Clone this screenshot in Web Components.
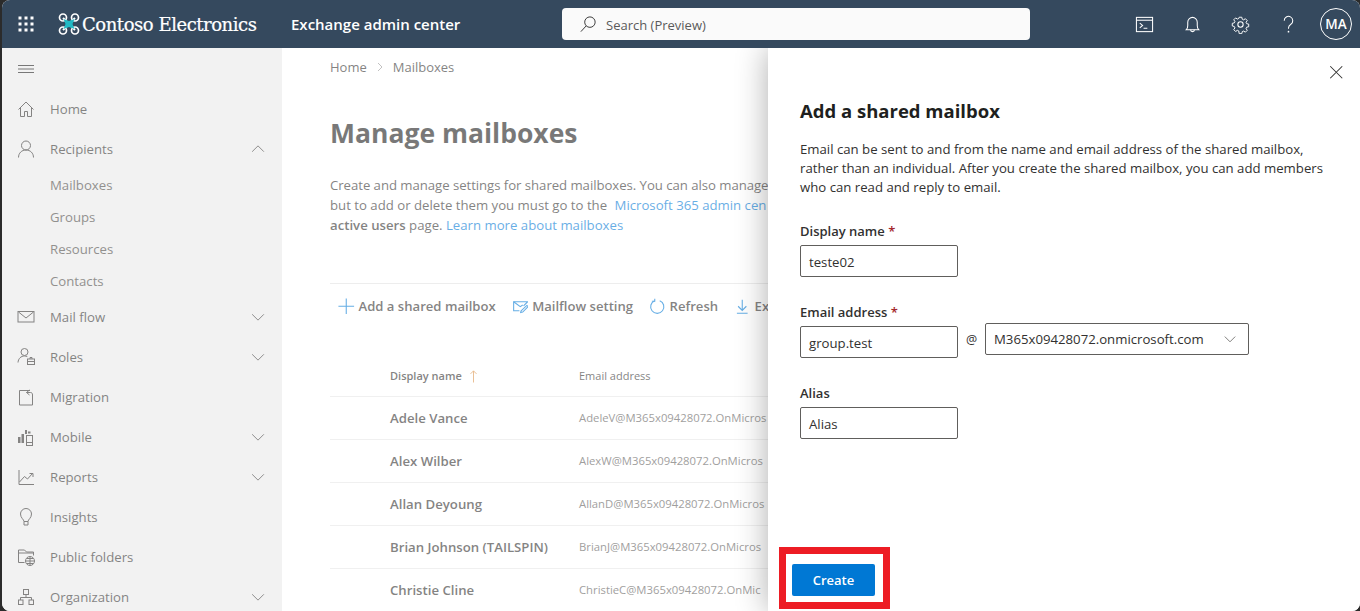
<!DOCTYPE html>
<html lang="en"><head><meta charset="utf-8"><title>Exchange admin center</title>
<style>
html,body{margin:0;height:611px;overflow:hidden;background:#2b2b2b;font-family:"Open Sans","Liberation Sans",sans-serif;}
</style></head><body>
<x-app>
  <x-topbar slot="top"></x-topbar>
  <x-sidenav slot="nav">
    <x-nav-item icon="home">Home</x-nav-item>
    <x-nav-item icon="person" chevron="up">Recipients</x-nav-item>
    <x-sub-item>Mailboxes</x-sub-item>
    <x-sub-item>Groups</x-sub-item>
    <x-sub-item>Resources</x-sub-item>
    <x-sub-item>Contacts</x-sub-item>
    <x-nav-item icon="mail" chevron="down">Mail flow</x-nav-item>
    <x-nav-item icon="roles" chevron="down">Roles</x-nav-item>
    <x-nav-item icon="migration">Migration</x-nav-item>
    <x-nav-item icon="mobile" chevron="down">Mobile</x-nav-item>
    <x-nav-item icon="reports" chevron="down">Reports</x-nav-item>
    <x-nav-item icon="bulb">Insights</x-nav-item>
    <x-nav-item icon="pubfolder">Public folders</x-nav-item>
    <x-nav-item icon="org" chevron="down">Organization</x-nav-item>
  </x-sidenav>
  <x-main slot="main"></x-main>
  <x-panel slot="panel"></x-panel>
</x-app>
<script>
const S='fill="none" stroke="currentColor" stroke-width="1"';
const ICONS={
 waffle:`<g fill="currentColor">${[3,9,15].flatMap(y=>[3,9,15].map(x=>`<rect x="${x-.5}" y="${y-.5}" width="3" height="3"/>`)).join('')}</g>`,
 home:`<path ${S} d="M2.5 10.5 10 3l7.5 7.5M4.5 8.5V17.500h4v-5h3v5h4V8.500"/>`,
 person:`<g ${S}><circle cx="10" cy="6.500" r="4.500"/><path d="M2.500 18.500c0-4.500 3.300-7.500 7.500-7.500s7.500 3 7.500 7.500"/></g>`,
 mail:`<g ${S}><rect x="2" y="4.500" width="16" height="10.500"/><path d="M2.500 5 10 11l7.500-6"/></g>`,
 roles:`<g ${S}><circle cx="8.500" cy="5" r="3.500"/><path d="M2 15.500c.3-4 3-6.500 6.500-6.500 1 0 2 .2 2.800.6"/><rect x="11.500" y="12" width="7" height="5.500"/><path d="M14 12v-1.500h2V12M11.500 14.500h7"/></g>`,
 migration:`<g ${S}><path d="M14 3.500H3.500V18h13v-7"/><path d="M13.500 8 10.500 5.500l3-2.500M10.500 5.500h4c1.500 0 2 1 2 2.500V18"/></g>`,
 mobile:`<g fill="currentColor"><rect x="2" y="10" width="2.500" height="6"/><rect x="5.500" y="7" width="2.500" height="9"/><rect x="9" y="3" width="2" height="4"/><rect x="12" y="4.500" width="2.500" height="2"/></g><g ${S}><rect x="10.500" y="8.500" width="6" height="10"/><path d="M10.500 15.500h6"/></g>`,
 reports:`<g ${S}><path d="M3 3v14.500h15"/><path d="m3.500 15 5-5.500 3 2.500 5-5.500M13.500 6.500h3.500V10"/></g>`,
 bulb:`<g ${S}><path d="M8 14.500c0-2-3.500-3.500-3.500-7.500a5.500 5.500 0 0 1 11 0c0 4-3.500 5.500-3.500 7.500z"/><path d="M8 14.500v3.500h4v-3.500"/></g>`,
 pubfolder:`<g ${S}><path d="M2.500 15.500V3h6l2 2h7v3.500M2.500 6h15M2.500 15.500h6"/><circle cx="14" cy="14" r="4.500"/><path d="M9.500 14h9M14 9.500v9M11 11.500h6M11 16.500h6"/></g>`,
 org:`<g ${S}><rect x="7.500" y="2.500" width="5" height="5"/><rect x="2.500" y="13" width="4.500" height="4.500"/><rect x="13" y="13" width="4.500" height="4.500"/><path d="M10 7.500v3M4.500 13v-2.500h11V13"/></g>`,
 chevdown:`<path ${S} d="m3.500 7 6.500 6.500L16.500 7"/>`,
 chevup:`<path ${S} d="M3.500 13 10 6.500 16.500 13"/>`,
 chevr:`<path ${S} d="m6 2 8 8-8 8"/>`,
 hamburger:`<path ${S} d="M2 6.500h16M2 10h16M2 13.500h16"/>`,
 close:`<path ${S} d="m3.500 3.500 13 13M16.500 3.500l-13 13"/>`,
 search:`<g ${S}><circle cx="11.500" cy="7.500" r="5.500"/><path d="M7.500 11.500 2 17.500"/></g>`,
 console:`<g ${S}><rect x="1.500" y="2.500" width="17" height="15"/><path d="M1.500 5.500h17"/><path d="m5 8.500 3 2.500-3 2.500M9 14h4"/></g>`,
 bell:`<g ${S}><path d="M3.500 15.500h13c-1-1-1.500-2-1.500-4.500V7.500a5 5 0 0 0-10 0V11c0 2.500-.5 3.500-1.500 4.500z"/><path d="M8 15.500a2 2 0 0 0 4 0"/></g>`,
 gear:`<g ${S}><circle cx="10" cy="10" r="2.800"/><path d="M8.500 2h3l.5 2.300 1.600.7 2-1.300 2.100 2.100-1.300 2 .7 1.600 2.300.5v3l-2.300.5-.7 1.600 1.300 2-2.100 2.100-2-1.300-1.600.7-.5 2.300h-3L8 17.700l-1.600-.7-2 1.300-2.100-2.100 1.300-2-.7-1.600L.6 12V9l2.300-.5.700-1.600-1.300-2 2.100-2.100 2 1.300L8 3.400z" transform="translate(.8 .5) scale(.92)"/></g>`,
 help:`<g ${S}><path d="M5.500 6a4.500 4.500 0 1 1 7 3.700c-1.500 1-2.500 2-2.500 4v.800"/></g><circle cx="10" cy="17.500" r=".9" fill="currentColor"/>`,
 plus:`<path ${S} d="M10 .5v19M.5 10h19"/>`,
 mailflow:`<g ${S}><path d="M9 15.500H2V4.500h17l-5 5"/><path d="M2 4.500 10 10.500l3-2M11 15.500l7-6.500 1.500 1.500-6.500 6.500-2.500.5z"/></g>`,
 refresh:`<g ${S}><path d="M13 3.200A8 8 0 1 1 7 3.200"/><path d="M7 .800V4H3.500"/></g>`,
 download:`<g ${S}><path d="M10 2v13M5 10l5 5 5-5M3.500 18.500h13"/></g>`,
 sortup:`<path ${S} d="M10 18V2.500M6 6.500l4-4 4 4"/>`
};
function def(name,css,html){
  customElements.define(name,class extends HTMLElement{
    constructor(){super();this.attachShadow({mode:'open'});}
    connectedCallback(){this.shadowRoot.innerHTML=`<style>${css}</style>`+(typeof html==='function'?html(this):html);}
  });
}
def('x-icon',':host{display:inline-flex;width:var(--s,20px);height:var(--s,20px);flex:none;color:inherit}svg{width:100%;height:100%;display:block}svg [stroke]{stroke-width:var(--sw,1px)}',
  el=>`<svg viewBox="0 0 20 20" aria-hidden="true">${ICONS[el.getAttribute('name')]||''}</svg>`);
def('x-app',`:host{display:grid;grid-template-rows:48px 1fr;grid-template-columns:280px 1fr;height:611px;margin-left:2px;border-radius:8px;overflow:hidden;position:relative;background:#fff}
 ::slotted([slot=top]){grid-column:1/3}
 .dim{position:absolute;left:0;right:0;top:48px;bottom:0;background:rgba(255,255,255,.4);pointer-events:none}`,
 `<slot name="top"></slot><slot name="nav"></slot><slot name="main"></slot><div class="dim"></div><slot name="panel"></slot>`);
def('x-topbar',`:host{display:flex;align-items:center;background:#35495e;color:#fff;height:48px;position:relative;z-index:3}
 .left{display:flex;align-items:center;width:560px;flex:none}
 .w{width:48px;display:flex;justify-content:center;--s:20px}
 .logo{width:22px;height:24px;margin-left:8px;flex:none}
 .brand{font:400 18px/24px "DejaVu Serif",serif;letter-spacing:-.45px;margin-left:2px;width:209px;white-space:nowrap;-webkit-text-stroke:.2px #fff;padding-top:2px}
 .app{font:600 15px/20px "Open Sans",sans-serif;white-space:nowrap}
 .search{width:468px;height:32px;background:#fafafa;border-radius:4px;display:flex;align-items:center;color:#5a5a5a;font:400 13px/20px "Open Sans",sans-serif;flex:none}
 .search x-icon{--s:19px;margin-left:17px;margin-right:8px;color:#333}
 .search span{padding-top:2px}
 .right{margin-left:auto;display:flex;align-items:center}
 .b{width:48px;height:48px;display:flex;align-items:center;justify-content:center;--s:19px;--sw:1.100px}
 .av{box-sizing:border-box;width:32px;height:32px;border:1px solid #fff;border-radius:50%;display:flex;align-items:center;justify-content:center;font:600 13.500px "Open Sans",sans-serif}`,
 `<div class="left"><div class="w"><x-icon name="waffle"></x-icon></div>
  <svg class="logo" viewBox="0 0 22 24"><path d="M5 6 17 18M17 6 5 18" stroke="#fff" stroke-width="2"/><g fill="none" stroke="#fff" stroke-width="1.700"><circle cx="5" cy="5.500" r="3.500"/><circle cx="17" cy="5.500" r="3.500"/><circle cx="5" cy="18.500" r="3.500"/><circle cx="17" cy="18.500" r="3.500"/></g><path d="M5.500 7 11 9 16.500 7 14.500 12 16.500 17 11 15 5.500 17 7.500 12z" fill="#21b9c4"/></svg>
  <div class="brand">Contoso Electronics</div><div class="app">Exchange admin center</div></div>
  <div class="search"><x-icon name="search"></x-icon><span>Search (Preview)</span></div>
  <div class="right"><div class="b"><x-icon name="console"></x-icon></div><div class="b"><x-icon name="bell"></x-icon></div><div class="b"><x-icon name="gear"></x-icon></div><div class="b"><x-icon name="help"></x-icon></div><div class="b"><div class="av">MA</div></div></div>`);
def('x-sidenav',`:host{display:block;background:#e9e9e9;color:#323130;overflow:hidden;height:563px}
 .h{height:41px;display:flex;align-items:center;padding-left:14px;color:#1f1f1f;--s:20px}`,
 `<div class="h"><x-icon name="hamburger"></x-icon></div><slot></slot>`);
def('x-nav-item',`:host{display:flex;align-items:center;height:40px;padding-left:14px;font:400 13.200px/20px "Open Sans",sans-serif}
 .t{flex:1;white-space:nowrap;margin-left:14px}
 .c{--s:18px;margin-right:15px;}
 .i{--s:20px;margin-left:0}`,
 el=>`<x-icon class="i" name="${el.getAttribute('icon')}"></x-icon><span class="t"><slot></slot></span>${el.hasAttribute('chevron')?`<x-icon class="c" name="chev${el.getAttribute('chevron')}"></x-icon>`:''}`);
def('x-sub-item',`:host{display:flex;align-items:center;height:32px;padding-left:48px;font:400 13.200px/20px "Open Sans",sans-serif;color:#484644}`,`<slot></slot>`);
def('x-toolitem',`:host{display:inline-flex;align-items:center;height:44px;padding:0 8px;gap:4px;font:600 13.100px/20px "Open Sans",sans-serif;color:#323130;white-space:nowrap}
 x-icon{--s:16.500px;--sw:1.300px;color:#0078d4}`,
 el=>`<x-icon name="${el.getAttribute('icon')}"></x-icon><slot></slot>`);
def('x-row',`:host{display:flex;align-items:center;height:42px;border-bottom:1px solid #e6e6e6;white-space:nowrap}
 .n{width:189px;padding-left:60px;box-sizing:content-box;flex:none;font:600 13.200px/20px "Open Sans",sans-serif;color:#323130}
 .e{font:400 11.300px/20px "Open Sans",sans-serif;color:#605e5c}`,
 el=>`<span class="n">${el.getAttribute('name')}</span><span class="e">${el.getAttribute('email')}</span>`);
def('x-main',`:host{display:block;background:#fff;padding-left:48px;overflow:hidden;color:#201f1e;height:563px;box-sizing:border-box;width:486px}
 .bc{height:38px;display:flex;align-items:center;font:400 13px/20px "Open Sans",sans-serif;color:#323130;gap:8px}
 .bc x-icon{--s:10px}
 h1{margin:27px 0 0;font:700 26.500px/40px "Open Sans",sans-serif;color:#201f1e;white-space:nowrap}
 p{margin:22px 0 0;font:400 13.200px/20px "Open Sans",sans-serif;color:#323130;white-space:nowrap}
 .l1{letter-spacing:-.05px}
 .m{margin-left:4px}
 a{color:#0078d4;text-decoration:none}
 b{font-weight:600}
 .div{margin-top:48px;height:1px;background:#e1e1e1}
 .tb{display:flex;white-space:nowrap}
 .th{margin-top:28px;height:40px;display:flex;align-items:center;border-bottom:1px solid #e6e6e6;font:400 11px/16px "Open Sans",sans-serif;color:#323130;white-space:nowrap}
 .th .n{width:189px;padding-left:60px;flex:none;display:flex;align-items:center;gap:4px;font-weight:600}
 .th x-icon{--s:15px;--sw:1.200px;color:#d98a3d}`,
 `<div class="bc"><span>Home</span><x-icon name="chevr"></x-icon><span>Mailboxes</span></div>
  <h1>Manage mailboxes</h1>
  <p><span class="l1">Create and manage settings for shared mailboxes. You can also manage</span><br>but to add or delete them you must go to the <a class="m">Microsoft 365 admin cen</a><br><b>active users</b> page. <a>Learn more about mailboxes</a></p>
  <div class="div"></div>
  <div class="tb"><x-toolitem icon="plus">Add a shared mailbox</x-toolitem><x-toolitem icon="mailflow">Mailflow setting</x-toolitem><x-toolitem icon="refresh">Refresh</x-toolitem><x-toolitem icon="download">Ex</x-toolitem></div>
  <div class="th"><span class="n">Display name <x-icon name="sortup"></x-icon></span><span>Email address</span></div>
  <x-row name="Adele Vance" email="AdeleV@M365x09428072.OnMicros"></x-row>
  <x-row name="Alex Wilber" email="AlexW@M365x09428072.OnMicros"></x-row>
  <x-row name="Allan Deyoung" email="AllanD@M365x09428072.OnMicros"></x-row>
  <x-row name="Brian Johnson (TAILSPIN)" email="BrianJ@M365x09428072.OnMicros"></x-row>
  <x-row name="Christie Cline" email="ChristieC@M365x09428072.OnMic"></x-row>`);
def('x-input',`:host{display:flex;align-items:center;box-sizing:border-box;width:158px;height:32px;border:1px solid #605e5c;border-radius:2px;padding:1px 8px 0;font:400 13.200px/20px "Open Sans",sans-serif;color:#323130;background:#fff;white-space:nowrap}`,`<slot></slot>`);
def('x-panel',`:host{position:absolute;top:48px;right:0;bottom:0;width:592px;background:#fff;box-shadow:0 0 30px rgba(0,0,0,.32);display:flex;flex-direction:column;z-index:2;color:#323130}
 .close{display:flex;justify-content:flex-end;padding:8px 8px 0 0}
 .close span{width:32px;height:32px;display:flex;align-items:center;justify-content:center;--s:18.500px;--sw:1.100px;color:#323130}
 .body{flex:1;padding:8px 32px 0}
 h2{margin:0;font:700 18.500px/30px "Open Sans",sans-serif;color:#201f1e;white-space:nowrap}
 p{margin:14px 0 24px;font:400 13.200px/19px "Open Sans",sans-serif;color:#323130;white-space:nowrap}
 label{display:block;font:600 13px/20px "Open Sans",sans-serif;color:#323130;white-space:nowrap}
 label i{color:#a4262c;font-style:normal}
 .g1{margin-top:4px;margin-bottom:25px}
 .rowl{margin-bottom:1px}
 .row{display:flex;align-items:flex-start;margin-bottom:25px}
 .row x-input.em{margin-top:3px}
 .at{width:27px;text-align:center;font:400 12.500px/32px "Open Sans",sans-serif;margin-top:1px}
 .sel{width:264px;justify-content:space-between;--s:16px;padding-top:0;padding-bottom:1px}
 .sel x-icon{margin-right:2px;color:#605e5c}
 .foot{padding:0 0 2px 11px;display:flex}
 .mark{border:7px solid #ed1c24;padding:10px 8px 6px 6px;display:flex}
 button{all:unset;box-sizing:border-box;width:83px;height:32px;background:#0078d4;border-radius:2px;color:#fff;font:600 13px/32px "Open Sans",sans-serif;text-align:center}`,
 `<div class="close"><span><x-icon name="close"></x-icon></span></div>
  <div class="body"><h2>Add a shared mailbox</h2>
  <p>Email can be sent to and from the name and email address of the shared mailbox,<br>rather than an individual. After you create the shared mailbox, you can add members<br>who can read and reply to email.</p>
  <label>Display name <i>*</i></label><div class="g1"><x-input>teste02</x-input></div>
  <label class="rowl">Email address <i>*</i></label>
  <div class="row"><x-input class="em">group.test</x-input><span class="at">@</span><x-input class="sel"><span>M365x09428072.onmicrosoft.com</span><x-icon name="chevdown"></x-icon></x-input></div>
  <label>Alias</label><div class="g1"><x-input>Alias</x-input></div></div>
  <div class="foot"><div class="mark"><button>Create</button></div></div>`);
</script>
</body></html>
